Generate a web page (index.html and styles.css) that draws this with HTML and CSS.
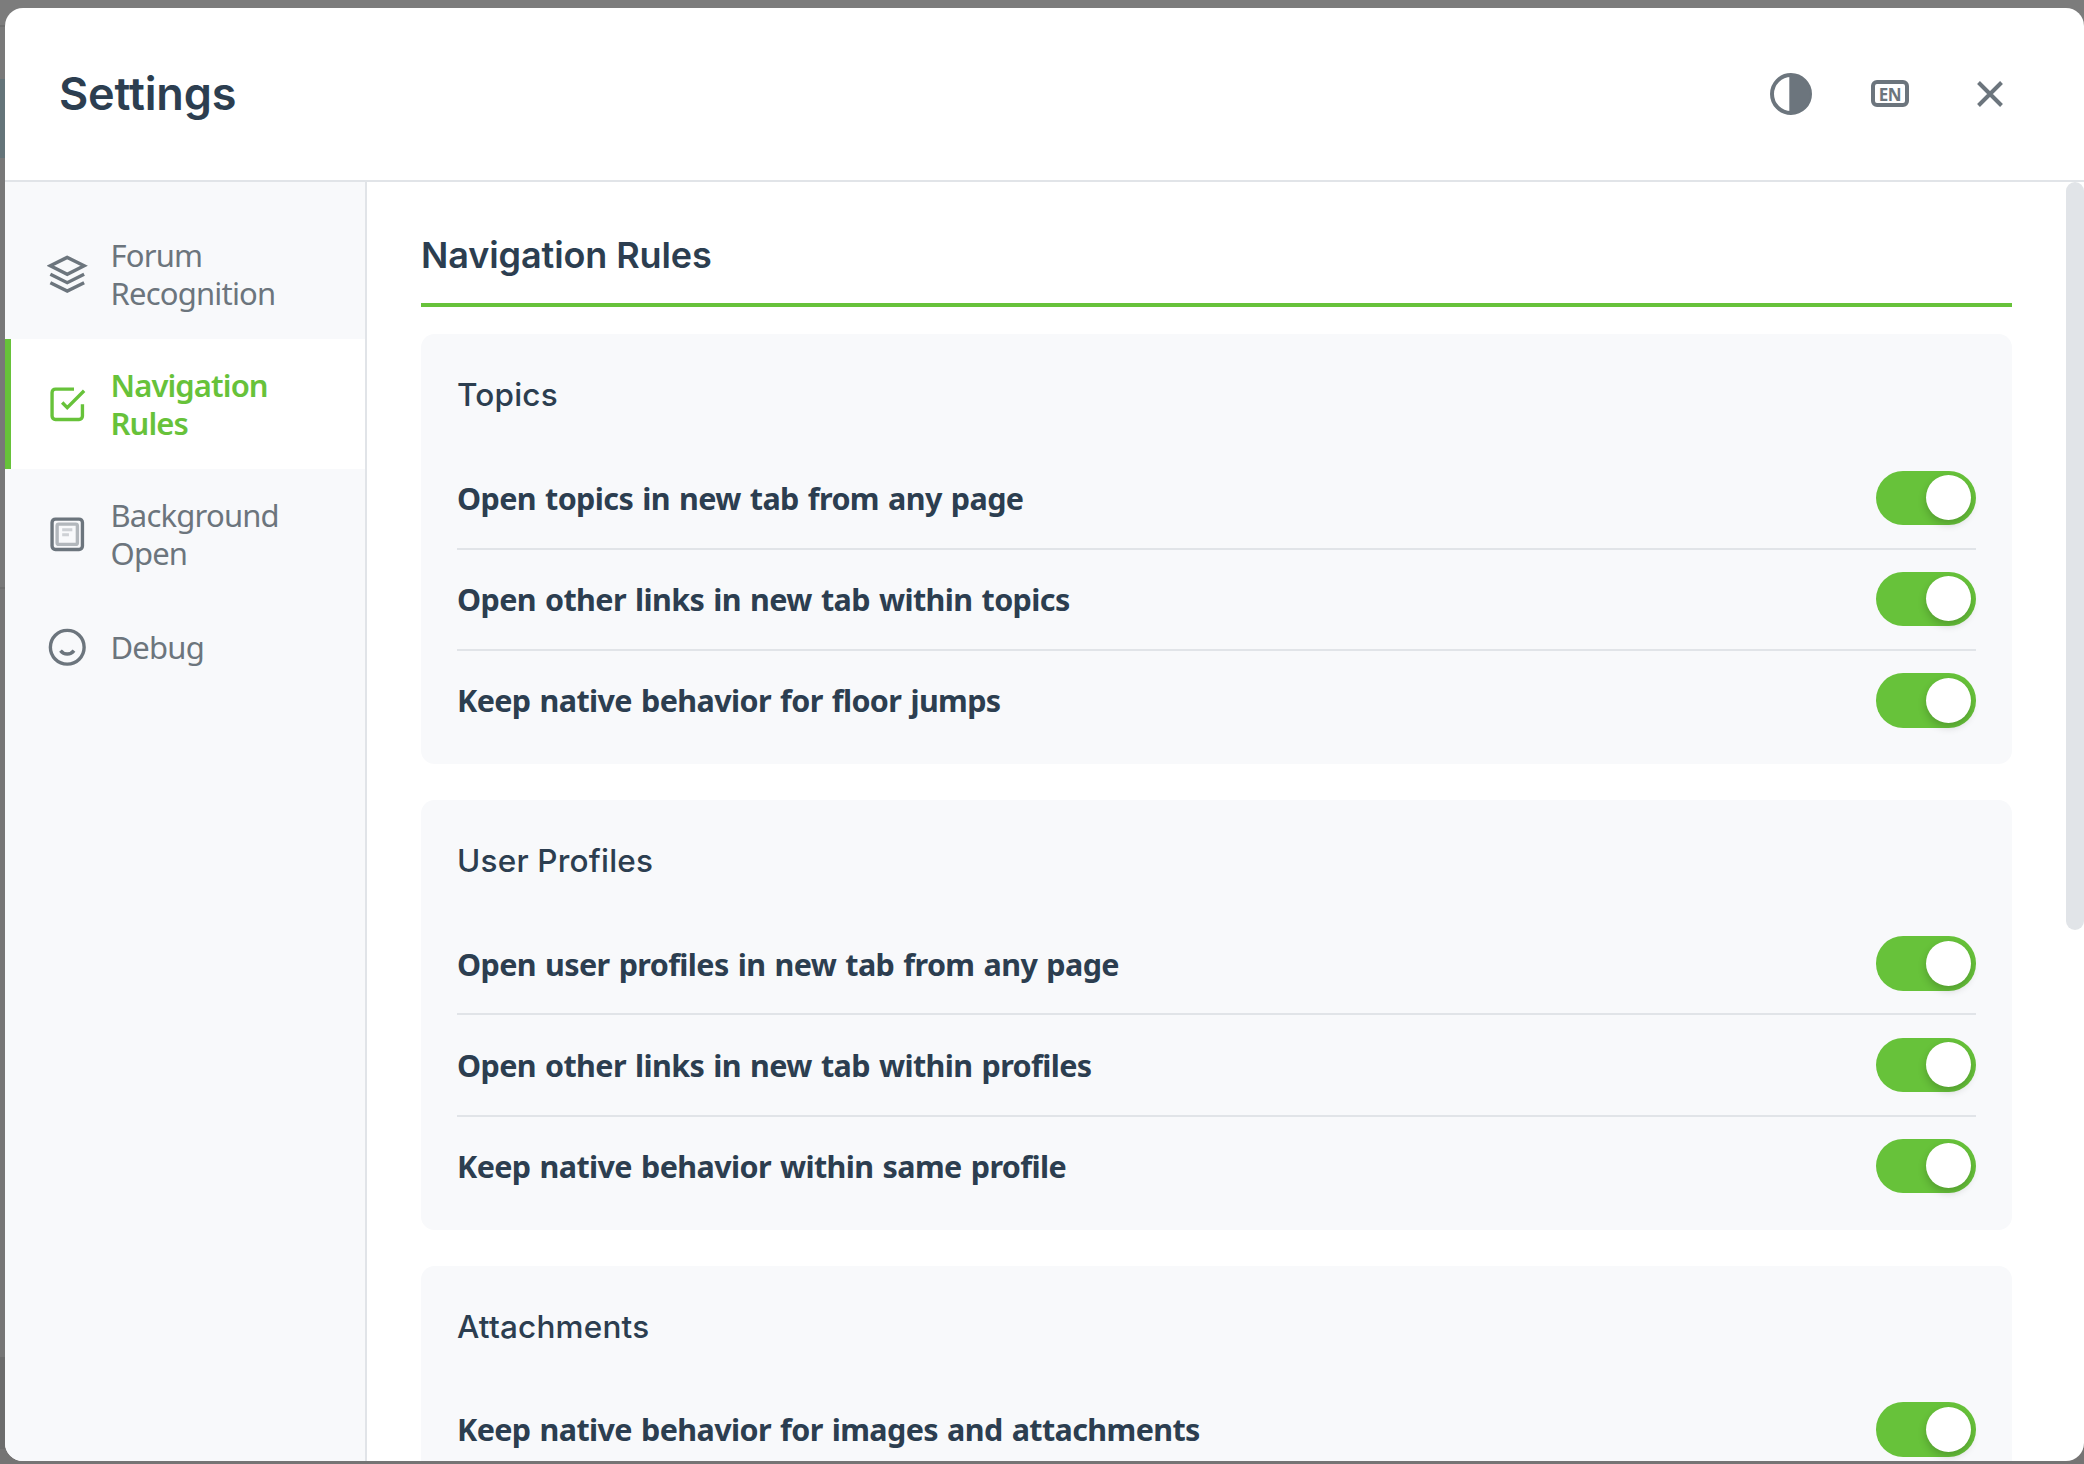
FILE: index.html
```html
<!DOCTYPE html>
<html lang="en">
<head>
<meta charset="utf-8">
<title>Settings</title>
<link rel="stylesheet" href="styles.css">
</head>
<body>
<div class="modal">
  <header class="header">
    <h1 class="header-title">Settings</h1>
    <div class="actions">
      <button class="action" aria-label="Theme">
        <svg width="42" height="42" viewBox="0 0 42 42"><circle cx="21" cy="21" r="19" fill="none" stroke="currentColor" stroke-width="4"/><path d="M19.300 2H21a19 19 0 0 1 0 38h-1.700z" fill="currentColor"/></svg>
      </button>
      <button class="action" aria-label="Language">
        <span class="lang">EN</span>
      </button>
      <button class="action" aria-label="Close">
        <svg width="26" height="26" viewBox="0 0 26 26"><path d="M1.500 1.500l23 23M24.500 1.500l-23 23" fill="none" stroke="currentColor" stroke-width="4"/></svg>
      </button>
    </div>
  </header>
  <div class="body">
    <nav class="sidebar">
      <a class="nav-item">
        <svg class="nav-icon" viewBox="0 0 24 24"><path d="M12 2L2 7l10 5 10-5-10-5z"/><path d="M2 17l10 5 10-5"/><path d="M2 12l10 5 10-5"/></svg>
        <span class="nav-label">Forum Recognition</span>
      </a>
      <a class="nav-item active">
        <svg class="nav-icon" viewBox="0 0 24 24"><path d="M9 11l3 3L22 4"/><path d="M21 12v7a2 2 0 0 1-2 2H5a2 2 0 0 1-2-2V5a2 2 0 0 1 2-2h11"/></svg>
        <span class="nav-label">Navigation Rules</span>
      </a>
      <a class="nav-item">
        <svg class="nav-icon" viewBox="0 0 24 24"><rect x="3" y="3" width="18" height="18" rx="2"/><rect x="6" y="6" width="12" height="12" rx="1" opacity=".5"/><path d="M9 9.300h6M9 12.300h4" stroke-width="1.800" opacity=".3"/></svg>
        <span class="nav-label">Background Open</span>
      </a>
      <a class="nav-item">
        <svg class="nav-icon" viewBox="0 0 24 24"><circle cx="12" cy="12" r="10"/><path d="M8 14s1.500 2 4 2 4-2 4-2"/></svg>
        <span class="nav-label">Debug</span>
      </a>
    </nav>
    <main class="content">
      <h2 class="content-title">Navigation Rules</h2>
      <section class="card">
        <h3 class="card-title">Topics</h3>
        <div class="row"><span class="row-label">Open topics in new tab from any page</span><span class="toggle"></span></div>
        <div class="row"><span class="row-label">Open other links in new tab within topics</span><span class="toggle"></span></div>
        <div class="row"><span class="row-label">Keep native behavior for floor jumps</span><span class="toggle"></span></div>
      </section>
      <section class="card">
        <h3 class="card-title">User Profiles</h3>
        <div class="row"><span class="row-label">Open user profiles in new tab from any page</span><span class="toggle"></span></div>
        <div class="row"><span class="row-label">Open other links in new tab within profiles</span><span class="toggle"></span></div>
        <div class="row"><span class="row-label">Keep native behavior within same profile</span><span class="toggle"></span></div>
      </section>
      <section class="card">
        <h3 class="card-title">Attachments</h3>
        <div class="row"><span class="row-label">Keep native behavior for images and attachments</span><span class="toggle"></span></div>
      </section>
    </main>
    <div class="scrollbar"><div class="thumb"></div></div>
  </div>
</div>
</body>
</html>
```
FILE: styles.css
```css
* {
  box-sizing: border-box;
  margin: 0;
}

body {
  width: 2084px;
  height: 1464px;
  overflow: hidden;
  padding: 8px 0 3px 5px;
  font-family: "Noto Sans", sans-serif;
  color: #2c3e50;
  background: linear-gradient(#7c7c7c 25px, #6e6e6e 25px, #6e6e6e 27px, #797979 27px, #797979 79px, #647479 79px, #647479 158px, #787878 158px, #787878 587px, #6e6e6e 587px, #6e6e6e 589px, #767676 589px, #767676 1357px, #6c6c6c 1357px, #6c6c6c 1449px, #757474 1449px);
}

.modal {
  height: 1453px;
  display: flex;
  flex-direction: column;
  overflow: hidden;
  border-radius: 18px;
  background: #fff;
}

.header {
  height: 174px;
  flex: none;
  display: flex;
  align-items: center;
  justify-content: space-between;
  padding: 0 54px;
  border-bottom: 2px solid #e1e4e8;
}

.header-title {
  font: 600 45px/54px Inter, sans-serif;
  letter-spacing: -.15px;
}

.actions {
  display: flex;
  gap: 18.5px;
  margin-top: -1px;
}

.action {
  width: 81px;
  height: 81px;
  display: flex;
  align-items: center;
  justify-content: center;
  border: 0;
  padding: 0;
  background: none;
  color: #6c757d;
}

.lang {
  width: 38px;
  height: 27px;
  border: 4px solid currentColor;
  border-radius: 6px;
  font: 700 17px/22px "Noto Sans", sans-serif;
  letter-spacing: -.5px;
  text-align: center;
}

.body {
  flex: 1;
  min-height: 0;
  display: grid;
  grid-template-columns: 362px 1fr 18px;
}

.sidebar {
  padding-top: 27px;
  background: #f8f9fb;
  border-right: 2px solid #e1e4e8;
}

.nav-item {
  min-height: 96px;
  display: flex;
  align-items: center;
  gap: 23px;
  padding: 27px 36px;
  border-left: 6px solid transparent;
  color: #6c757d;
  font-size: 31px;
  line-height: 38px;
  letter-spacing: -.8px;
}

.nav-item.active {
  background: #fff;
  border-left-color: #67c23a;
  color: #67c23a;
  font-weight: 600;
  letter-spacing: -.9px;
}

.nav-icon {
  width: 40.5px;
  height: 40.5px;
  flex: none;
  fill: none;
  stroke: currentColor;
  stroke-width: 2;
}

.nav-label {
  flex: 1;
}

.content {
  min-width: 0;
  overflow: hidden;
  padding: 53px 54px 0;
}

.content-title {
  height: 72px;
  margin-bottom: 27px;
  border-bottom: 4px solid #67c23a;
  font: 600 36px/40px Inter, sans-serif;
  letter-spacing: -.1px;
}

.card {
  height: 429.75px;
  margin-bottom: 36px;
  padding: 36px;
  border-radius: 13.5px;
  background: #f8f9fb;
}

.card-title {
  margin-bottom: 28.3px;
  font: 550 31.5px/50px Inter, sans-serif;
  letter-spacing: .2px;
}

.row {
  height: 101.25px;
  display: flex;
  align-items: center;
  justify-content: space-between;
  border-bottom: 2px solid #e1e4e8;
}

.row:last-child {
  height: 99.25px;
  border-bottom: 0;
}

.row-label {
  font-size: 30.5px;
  line-height: 42px;
  font-weight: 700;
  letter-spacing: -.62px;
  word-spacing: 1.8px;
}

.toggle {
  width: 100px;
  height: 54.4px;
  padding: 4.5px 5px;
  border-radius: 27.2px;
  background: #67c23a;
}

.toggle::before {
  content: "";
  display: block;
  width: 45px;
  height: 45px;
  margin-left: auto;
  border-radius: 50%;
  background: #fff;
  box-shadow: 0 4px 9px rgba(0, 0, 0, .2);
}

.thumb {
  height: 748px;
  border-radius: 9px;
  background: #e1e4e8;
}
```
